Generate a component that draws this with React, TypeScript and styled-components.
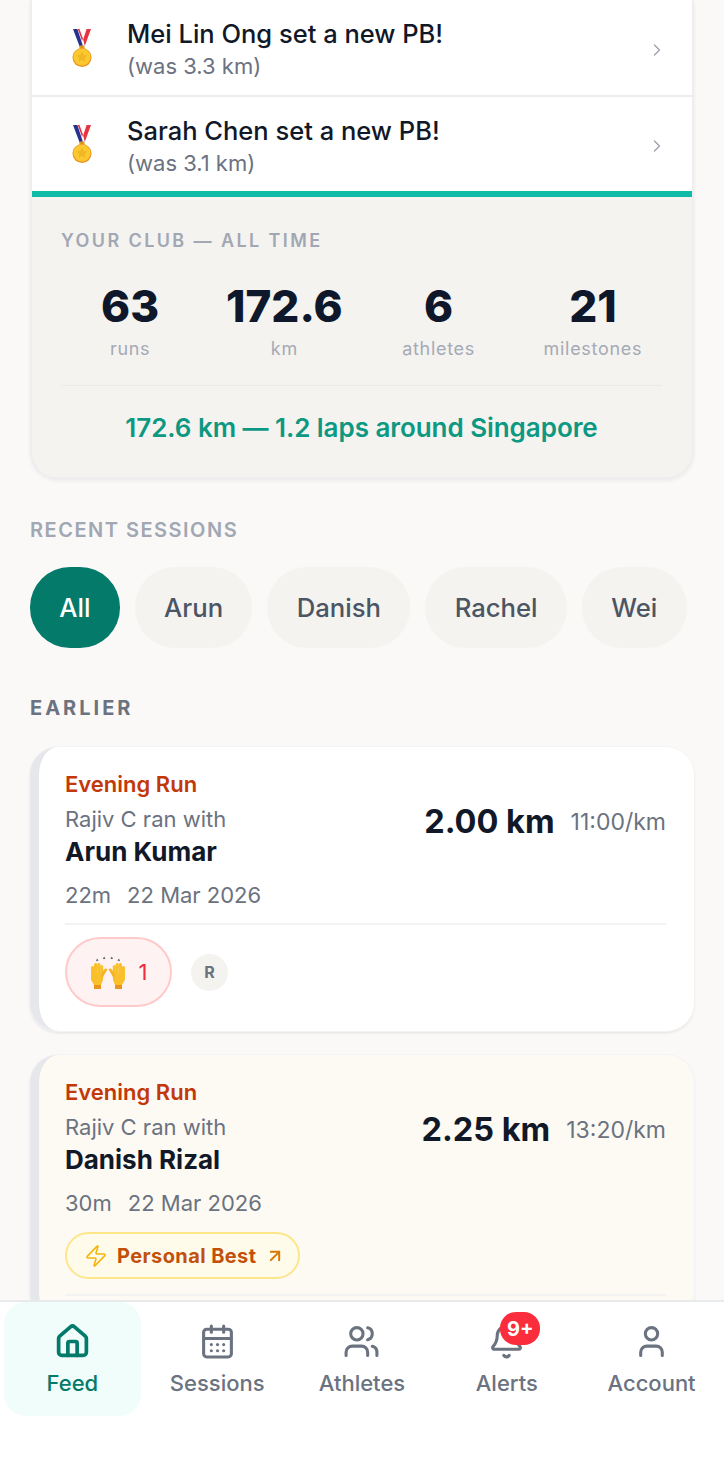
import React from 'react';
import styled, { createGlobalStyle } from 'styled-components';
import { ArrowUpRight, Bell, CalendarDays, ChevronRight, House, User, Users, Zap } from 'lucide-react';

const GlobalStyle = createGlobalStyle`
    html, body {
        margin: 0;
        padding: 0;
        background: #fff;
        font-family: Inter, "Liberation Sans", sans-serif;
    }
    * {
        box-sizing: border-box;
    }
`

const Page = styled.div`
    width: 724px;
    height: 1480px;
    display: flex;
    flex-direction: column;
    overflow: hidden;
    background: #fff;
`

const Feed = styled.main`
    height: 1300px;
    flex: none;
    overflow: hidden;
    padding: 0 30px;
    background: #faf9f7;
`

const Panel = styled.section`
    border: solid 2px #eeeef0;
    border-top: 0;
    border-radius: 0 0 28px 28px;
    overflow: hidden;
    box-shadow: 0 2px 4px rgba(17, 24, 39, 0.06);
    background: #f4f3f0;
`

const PbRow = styled.div<{ $last?: boolean }>`
    height: ${p => (p.$last ? '94px' : '97px')};
    display: flex;
    align-items: center;
    gap: 25px;
    padding: 0 25px 0 30px;
    background: #fff;
    border-bottom: ${p => (p.$last ? '0' : 'solid 2px #ecedef')};
    > svg {
        margin-top: 4px;
    }
`

const MedalBox = styled.div`
    width: 40px;
    display: flex;
    justify-content: center;
`

const PbText = styled.div`
    flex: 1;
    margin-top: 4px;
`

const PbTitle = styled.div`
    font-size: 25.5px;
    line-height: 34px;
    font-weight: 500;
    color: #111827;
`

const PbSub = styled.div`
    margin-top: -1px;
    font-size: 22px;
    line-height: 32px;
    color: #6b7280;
`

const TealBar = styled.div`
    height: 6px;
    background: #0dbba6;
`

const ClubBox = styled.div`
    height: 280px;
    padding: 34px 30px 0 29px;
    background: #f4f3f0;
`

const ClubLabel = styled.div`
    font-size: 18px;
    line-height: 20px;
    font-weight: 600;
    letter-spacing: 2.4px;
    color: #a1a7b3;
`

const StatGrid = styled.div`
    display: grid;
    grid-template-columns: repeat(4, 1fr);
    margin: 30px -8px 0;
`

const Stat = styled.div`
    display: flex;
    flex-direction: column;
    align-items: center;
`

const StatValue = styled.div`
    font-size: 44px;
    line-height: 50px;
    font-weight: 800;
    color: #0f172a;
`

const StatLabel = styled.div`
    margin-top: 7px;
    font-size: 18px;
    line-height: 22px;
    letter-spacing: 0.7px;
    color: #a5aab5;
`

const ClubFact = styled.div`
    margin-top: 25px;
    padding-top: 24px;
    border-top: solid 1px #ebeae7;
    text-align: center;
    font-size: 26px;
    line-height: 36px;
    font-weight: 600;
    letter-spacing: -0.05px;
    color: #0d9882;
`

const SectionLabel = styled.h2<{ $dark?: boolean }>`
    margin: 0;
    font-size: 20px;
    line-height: 24px;
    font-weight: ${p => (p.$dark ? 700 : 600)};
    letter-spacing: ${p => (p.$dark ? '3px' : '1.5px')};
    color: ${p => (p.$dark ? '#6b7280' : '#a1a7b3')};
`

const RecentBlock = styled.div`
    margin-top: 39px;
`

const Chips = styled.div`
    display: flex;
    gap: 15px;
    margin-top: 25px;
`

const Chip = styled.div<{ $active?: boolean }>`
    height: 81px;
    display: flex;
    align-items: center;
    padding: 0 29.3px;
    border-radius: 40px;
    font-size: 25.7px;
    font-weight: 450;
    background: ${p => (p.$active ? '#047a6b' : '#f4f3f0')};
    color: ${p => (p.$active ? '#fff' : '#4b5563')};
`

const EarlierBlock = styled.div`
    margin-top: 48px;
`

const CardList = styled.div`
    display: flex;
    flex-direction: column;
    gap: 24px;
    margin-top: 27px;
`

const Card = styled.article<{ $warm?: boolean }>`
    padding: 24px 28px 24px 26px;
    border-radius: 28px;
    border-left: solid 9px #e5e7eb;
    background: ${p => (p.$warm ? '#fdfaf3' : '#fff')};
    box-shadow: 0 0 0 1px #f3f3f4, 0 2px 3px rgba(17, 24, 39, 0.1);
`

const CardTop = styled.div`
    display: flex;
    justify-content: space-between;
`

const CardTitle = styled.div`
    font-size: 22px;
    line-height: 26px;
    font-weight: 600;
    color: #c2380a;
`

const RanWith = styled.div`
    margin-top: 9px;
    font-size: 22px;
    line-height: 26px;
    color: #6b7280;
`

const Partner = styled.div`
    margin-top: 4px;
    font-size: 26px;
    line-height: 32px;
    font-weight: 700;
    color: #111827;
`

const Metrics = styled.div`
    display: flex;
    align-items: center;
    gap: 16px;
    height: 44px;
    margin-top: 29px;
`

const Distance = styled.div`
    font-size: 32.5px;
    line-height: 44px;
    font-weight: 700;
    color: #111827;
`

const Pace = styled.div`
    font-size: 23px;
    color: #6b7280;
`

const MetaLine = styled.div`
    display: flex;
    gap: 16px;
    margin-top: 12px;
    font-size: 22px;
    line-height: 30px;
    color: #6b7280;
`

const Divider = styled.div<{ $gap: number }>`
    height: 2px;
    margin-top: ${p => p.$gap}px;
    background: #f3f3f4;
`

const Reactions = styled.div`
    display: flex;
    align-items: center;
    gap: 19px;
    margin-top: 12px;
`

const ReactionPill = styled.div`
    width: 107px;
    height: 70px;
    display: flex;
    align-items: center;
    justify-content: center;
    gap: 13px;
    border: solid 2px #fecaca;
    border-radius: 35px;
    background: #fef2f2;
    font-size: 22px;
    color: #ef2b3c;
`

const Avatar = styled.div`
    width: 37px;
    height: 37px;
    display: flex;
    align-items: center;
    justify-content: center;
    border-radius: 50%;
    background: #f4f3f0;
    font-size: 16px;
    font-weight: 700;
    color: #6b7280;
`

const PbBadge = styled.div`
    width: fit-content;
    height: 47px;
    display: flex;
    align-items: center;
    gap: 9px;
    margin-top: 14px;
    padding: 0 13px 0 17px;
    border: solid 2px #fde68a;
    border-radius: 24px;
    background: #fffbeb;
    font-size: 20px;
    font-weight: 700;
    letter-spacing: 0.4px;
    color: #c2500a;
    svg:first-child {
        color: #f5b50b;
    }
    svg:last-child {
        color: #d97706;
    }
`

const Nav = styled.nav`
    flex: 1;
    display: grid;
    grid-template-columns: repeat(5, 1fr);
    grid-auto-rows: 114px;
    gap: 8px;
    padding: 0 4px;
    border-top: solid 2px #e9eaed;
    background: #fff;
`

const Tab = styled.div<{ $active?: boolean }>`
    display: flex;
    flex-direction: column;
    align-items: center;
    gap: 8px;
    padding-top: 21px;
    border-radius: 22px;
    background: ${p => (p.$active ? '#f0fdfa' : 'transparent')};
    color: ${p => (p.$active ? '#047a6b' : '#6b7280')};
`

const TabIcon = styled.div`
    position: relative;
    height: 37px;
`

const TabLabel = styled.div`
    font-size: 22px;
    line-height: 30px;
    font-weight: 500;
`

const CountBadge = styled.span`
    position: absolute;
    top: -11px;
    left: 12px;
    width: 40px;
    height: 33px;
    display: flex;
    align-items: center;
    justify-content: center;
    border-radius: 16px;
    background: #fb2c3c;
    font-size: 20px;
    font-weight: 700;
    color: #fff;
`

function Medal() {
    return (
        <svg width="20" height="38" viewBox="0 0 20 38">
            <path d="M1 0h4.4l5.4 16.5-3 1.5z" fill="#27338f" />
            <path d="M5.8 0h1.7l3.4 9.5-.8 2.4z" fill="#e5343f" />
            <path d="M19 0h-4.4l-3.4 10.5 1.6 6.5z" fill="#e5343f" />
            <rect x="7.5" y="16.5" width="5" height="4" rx="1" fill="#d79a1b" />
            <circle cx="10" cy="28.5" r="9.5" fill="#e8951f" />
            <circle cx="10" cy="28" r="8.6" fill="#fbc92e" />
            <path d="M10 22.5l1.7 3.6 3.8.4-2.8 2.6.8 3.9-3.5-2-3.5 2 .8-3.9-2.8-2.6 3.8-.4z" fill="#f1b625" />
        </svg>
    )
}

function Hand({ flip }: { flip?: boolean }) {
    return (
        <g transform={flip ? 'translate(36 0) scale(-1 1)' : undefined}>
            <path d="M4 28h7v5H4z" fill="#e8961e" />
            <rect x="1" y="10" width="3.2" height="13" rx="1.6" fill="#f9c02c" />
            <rect x="4" y="7" width="3.2" height="14" rx="1.6" fill="#f9c02c" />
            <rect x="7.2" y="7" width="3.2" height="14" rx="1.6" fill="#f9c02c" />
            <rect x="10.2" y="9" width="3" height="13" rx="1.5" fill="#f9c02c" />
            <path d="M1 18h12v6l-2 5H4l-2.8-5z" fill="#f9c02c" />
            <path d="M11.8 23l5.6-9.4c-.8-1.4-2.2-1.4-3.2-.2L11 18z" fill="#f5b427" />
        </g>
    )
}

function RaisedHands() {
    return (
        <svg width="36" height="33" viewBox="0 0 36 33">
            <path d="M7 2.4l1.6 2.2L6 5.2zM14.2 0.4l1.2 2.6h-2.6zM21.8 0.4l1.2 2.6h-2.6zM29 2.4l1 2.8-2.6-.6z" fill="#55606e" />
            <Hand />
            <Hand flip />
        </svg>
    )
}

function PbItem({ name, was, last }: { name: string, was: string, last?: boolean }) {
    return (
        <PbRow $last={last}>
            <MedalBox><Medal /></MedalBox>
            <PbText>
                <PbTitle>{name} set a new PB!</PbTitle>
                <PbSub>(was {was} km)</PbSub>
            </PbText>
            <ChevronRight size={20} strokeWidth={1.6} color="#9ca3af" />
        </PbRow>
    )
}

const stats = [
    { value: '63', label: 'runs' },
    { value: '172.6', label: 'km' },
    { value: '6', label: 'athletes' },
    { value: '21', label: 'milestones' },
]

const chips = ['All', 'Arun', 'Danish', 'Rachel', 'Wei']

export default function App() {
    return (
        <Page>
            <GlobalStyle />
            <Feed>
                <Panel>
                    <PbItem name="Mei Lin Ong" was="3.3" />
                    <PbItem name="Sarah Chen" was="3.1" last />
                    <TealBar />
                    <ClubBox>
                        <ClubLabel>YOUR CLUB — ALL TIME</ClubLabel>
                        <StatGrid>
                            {stats.map(s => (
                                <Stat key={s.label}>
                                    <StatValue>{s.value}</StatValue>
                                    <StatLabel>{s.label}</StatLabel>
                                </Stat>
                            ))}
                        </StatGrid>
                        <ClubFact>172.6 km — 1.2 laps around Singapore</ClubFact>
                    </ClubBox>
                </Panel>

                <RecentBlock>
                    <SectionLabel>RECENT SESSIONS</SectionLabel>
                    <Chips>
                        {chips.map((c, i) => <Chip key={c} $active={i === 0}>{c}</Chip>)}
                    </Chips>
                </RecentBlock>

                <EarlierBlock>
                    <SectionLabel $dark>EARLIER</SectionLabel>
                    <CardList>
                        <Card>
                            <CardTop>
                                <div>
                                    <CardTitle>Evening Run</CardTitle>
                                    <RanWith>Rajiv C ran with</RanWith>
                                    <Partner>Arun Kumar</Partner>
                                </div>
                                <Metrics>
                                    <Distance>2.00 km</Distance>
                                    <Pace>11:00/km</Pace>
                                </Metrics>
                            </CardTop>
                            <MetaLine><span>22m</span><span>22 Mar 2026</span></MetaLine>
                            <Divider $gap={13} />
                            <Reactions>
                                <ReactionPill><RaisedHands />1</ReactionPill>
                                <Avatar>R</Avatar>
                            </Reactions>
                        </Card>
                        <Card $warm>
                            <CardTop>
                                <div>
                                    <CardTitle>Evening Run</CardTitle>
                                    <RanWith>Rajiv C ran with</RanWith>
                                    <Partner>Danish Rizal</Partner>
                                </div>
                                <Metrics>
                                    <Distance>2.25 km</Distance>
                                    <Pace>13:20/km</Pace>
                                </Metrics>
                            </CardTop>
                            <MetaLine><span>30m</span><span>22 Mar 2026</span></MetaLine>
                            <PbBadge>
                                <Zap size={24} strokeWidth={1.6} />
                                Personal Best
                                <ArrowUpRight size={20} strokeWidth={2.4} />
                            </PbBadge>
                            <Divider $gap={15} />
                        </Card>
                    </CardList>
                </EarlierBlock>
            </Feed>

            <Nav>
                <Tab $active>
                    <TabIcon><House size={37} strokeWidth={2.4} /></TabIcon>
                    <TabLabel>Feed</TabLabel>
                </Tab>
                <Tab>
                    <TabIcon><CalendarDays size={37} strokeWidth={2} /></TabIcon>
                    <TabLabel>Sessions</TabLabel>
                </Tab>
                <Tab>
                    <TabIcon><Users size={37} strokeWidth={2} /></TabIcon>
                    <TabLabel>Athletes</TabLabel>
                </Tab>
                <Tab>
                    <TabIcon>
                        <Bell size={37} strokeWidth={2} />
                        <CountBadge>9+</CountBadge>
                    </TabIcon>
                    <TabLabel>Alerts</TabLabel>
                </Tab>
                <Tab>
                    <TabIcon><User size={37} strokeWidth={2} /></TabIcon>
                    <TabLabel>Account</TabLabel>
                </Tab>
            </Nav>
        </Page>
    )
}
